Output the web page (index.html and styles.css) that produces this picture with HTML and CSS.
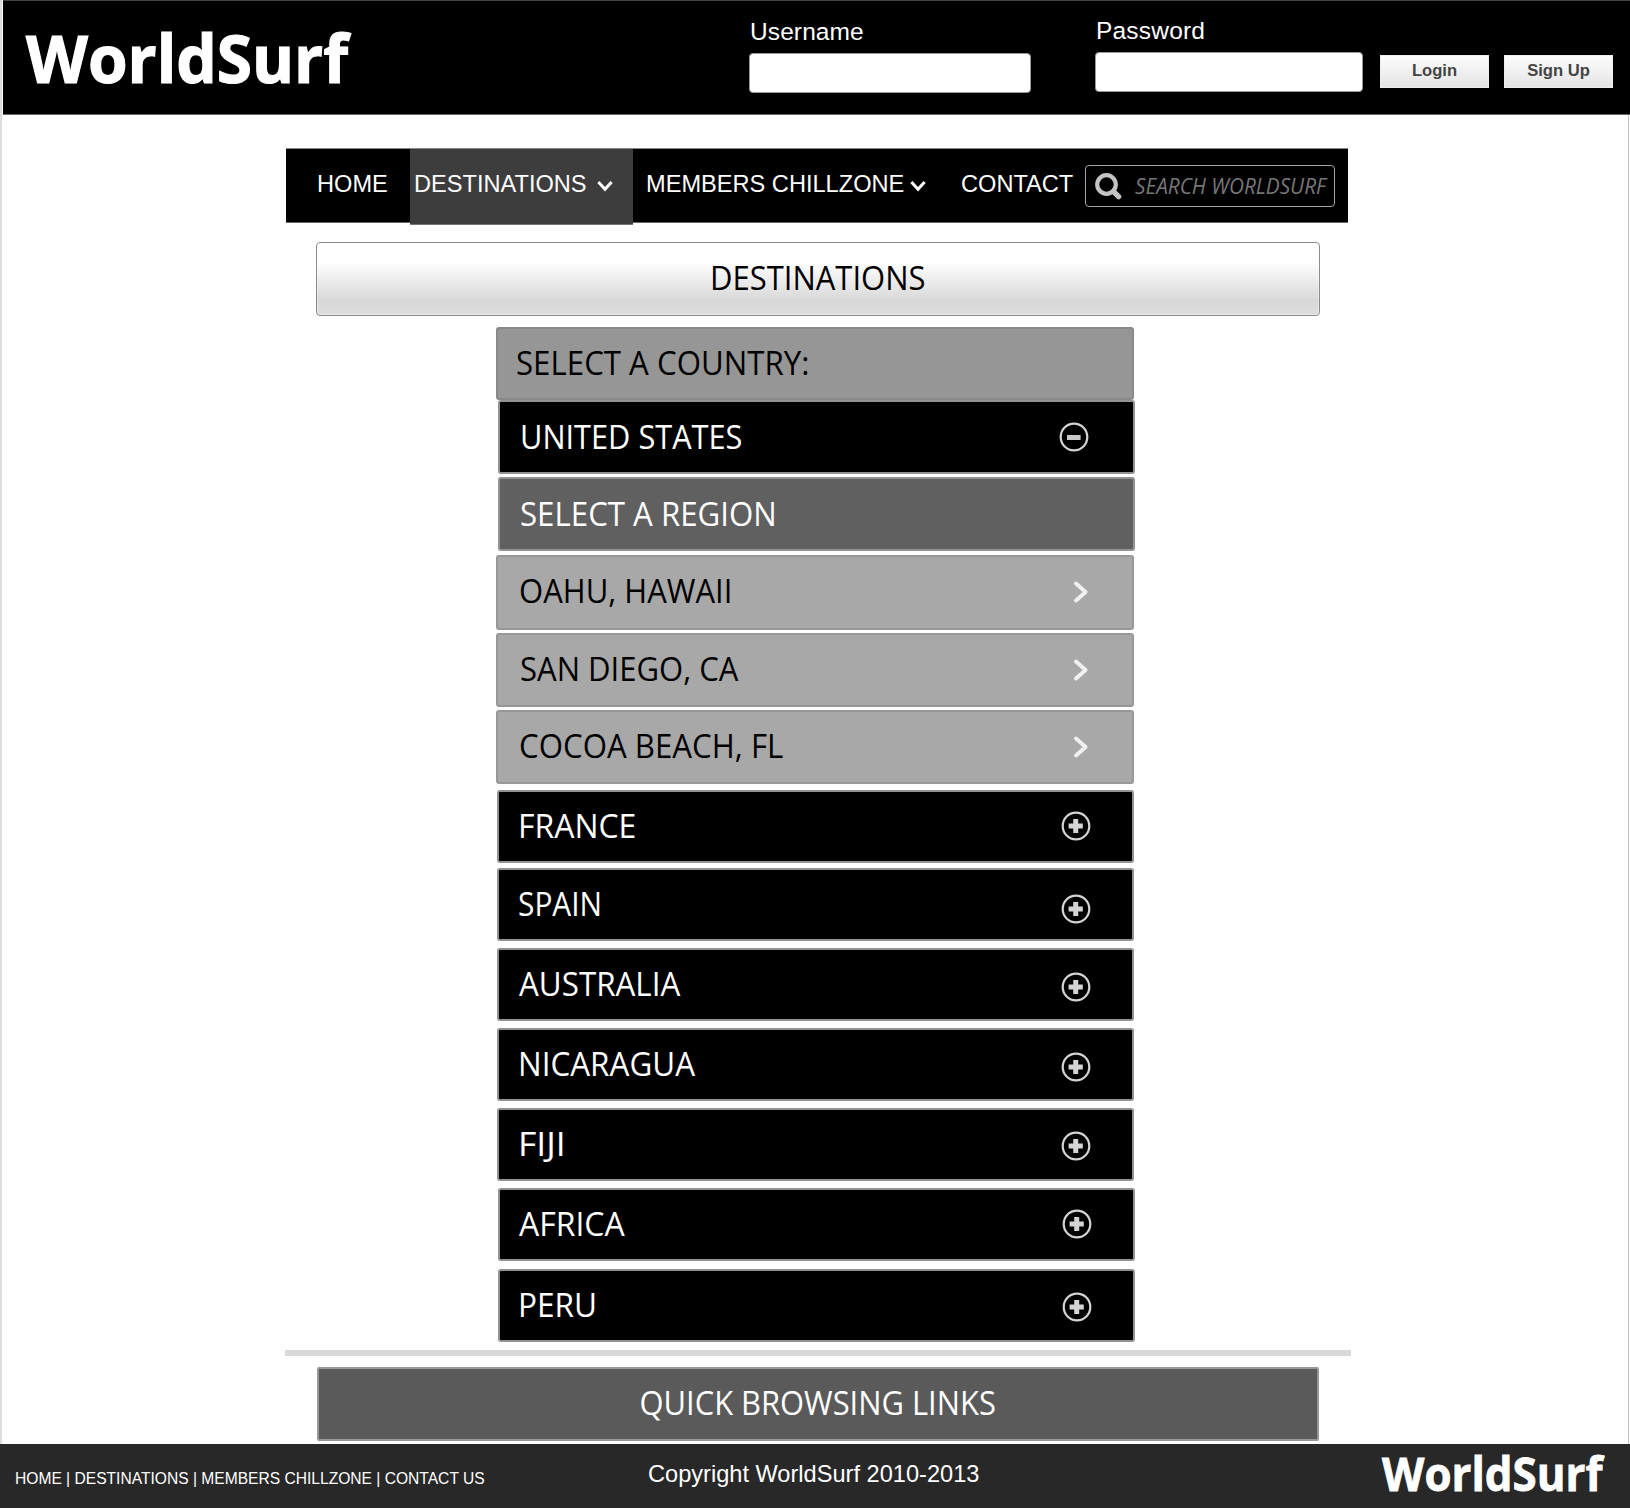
FILE: index.html
```html
<!DOCTYPE html>
<html lang="en">
<head>
<meta charset="utf-8">
<title>WorldSurf - Destinations</title>
<link rel="stylesheet" href="styles.css">
</head>
<body>
<svg class="sprite" aria-hidden="true">
  <symbol id="plus" viewBox="0 0 30 30"><circle cx="15" cy="15" r="13.3" fill="none" stroke="#d4d4d4" stroke-width="2.2"/><path d="M12.2 8h5v4.6h4.6v4.8h-4.6V22h-5v-4.6H7.6v-4.8h4.6z" fill="#d4d4d4"/></symbol>
  <symbol id="minus" viewBox="0 0 30 30"><circle cx="15" cy="15" r="13.3" fill="none" stroke="#d4d4d4" stroke-width="2.2"/><path d="M8 13h13.6v5H8z" fill="#c8c8c8"/></symbol>
  <symbol id="right" viewBox="0 0 16 24"><path d="M3 3.6 12.6 12 3 20.4" fill="none" stroke="#f0f0f0" stroke-width="4" stroke-linecap="round" stroke-linejoin="round"/></symbol>
  <symbol id="down" viewBox="0 0 16 12"><path d="M1.4 2 8 9.2 14.6 2" fill="none" stroke="#fff" stroke-width="3"/></symbol>
</svg>
<div class="page">
  <header class="header">
    <div class="logo">WorldSurf</div>
    <label class="field field-user"><span>Username</span><input class="input" type="text"></label>
    <label class="field field-pass"><span>Password</span><input class="input" type="password"></label>
    <button class="button">Login</button>
    <button class="button">Sign Up</button>
  </header>

  <nav class="nav">
    <a class="nav-item nav-home">HOME</a>
    <a class="nav-item nav-active">DESTINATIONS<svg class="down"><use href="#down"/></svg></a>
    <a class="nav-item nav-members">MEMBERS CHILLZONE<svg class="down"><use href="#down"/></svg></a>
    <a class="nav-item nav-contact">CONTACT</a>
    <div class="search">
      <svg class="search-icon" viewBox="0 0 27 27"><circle cx="11.5" cy="11.5" r="9.3" fill="none" stroke="#c4c4c4" stroke-width="4.2"/><path d="M18.6 18.6 23.6 23.6" stroke="#c4c4c4" stroke-width="5.4" stroke-linecap="round"/></svg>
      <span class="search-text">SEARCH WORLDSURF</span>
    </div>
  </nav>

  <h1 class="title"><span>DESTINATIONS</span></h1>

  <ul class="list">
    <li class="row prompt"><span class="label">SELECT A COUNTRY:</span></li>
    <li class="row usa"><span class="label">UNITED STATES</span><svg class="icon"><use href="#minus"/></svg></li>
    <li class="row regions"><span class="label">SELECT A REGION</span></li>
    <li class="row place oahu"><span class="label">OAHU, HAWAII</span><svg class="right"><use href="#right"/></svg></li>
    <li class="row place diego"><span class="label">SAN DIEGO, CA</span><svg class="right"><use href="#right"/></svg></li>
    <li class="row place cocoa"><span class="label">COCOA BEACH, FL</span><svg class="right"><use href="#right"/></svg></li>
    <li class="row france"><span class="label">FRANCE</span><svg class="icon"><use href="#plus"/></svg></li>
    <li class="row spain"><span class="label">SPAIN</span><svg class="icon"><use href="#plus"/></svg></li>
    <li class="row australia"><span class="label">AUSTRALIA</span><svg class="icon"><use href="#plus"/></svg></li>
    <li class="row nicaragua"><span class="label">NICARAGUA</span><svg class="icon"><use href="#plus"/></svg></li>
    <li class="row fiji"><span class="label">FIJI</span><svg class="icon"><use href="#plus"/></svg></li>
    <li class="row africa"><span class="label">AFRICA</span><svg class="icon"><use href="#plus"/></svg></li>
    <li class="row peru"><span class="label">PERU</span><svg class="icon"><use href="#plus"/></svg></li>
  </ul>

  <hr class="rule">
  <section class="quick"><span>QUICK BROWSING LINKS</span></section>
</div>
<footer class="footer">
  <div class="footer-links">HOME | DESTINATIONS | MEMBERS CHILLZONE | CONTACT US</div>
  <div class="copyright">Copyright WorldSurf 2010-2013</div>
  <div class="footer-logo">WorldSurf</div>
</footer>
</body>
</html>
```
FILE: styles.css
```css
* { box-sizing: border-box; }
body {
  margin: 0;
  width: 1630px;
  height: 1508px;
  background: #fefefe;
  font-family: "Liberation Sans", Arial, sans-serif;
}
.sprite { display: none; }
svg { flex: none; }
.page {
  height: 1444px;
  border-left: 2px solid #ddd;
  background: linear-gradient(#c4c4c4, #c4c4c4) right 1px top / 1px 100% no-repeat;
}

/* Header */
.header {
  display: flex;
  align-items: flex-start;
  height: 115px;
  margin-left: 1px;
  background: #000;
  border-top: 1px solid #444;
  border-bottom: 1px solid #666;
  color: #fff;
}
.logo {
  width: 724px;
  margin: 23px -2px 0 23px;
  font: bold 67px/67px "Open Sans", sans-serif;
  -webkit-text-stroke: 1.2px #fff;
  transform: scaleX(.956);
  transform-origin: left;
}
.field span {
  display: block;
  padding-left: 1px;
  font-size: 24.5px;
  line-height: 30px;
}
.input {
  display: block;
  width: 100%;
  height: 40px;
  margin-top: 6px;
  padding: 0 8px;
  border: 1px solid #999;
  border-radius: 4px;
  background: #fff;
}
.field-user { width: 282px; margin: 16px 64px 0 1px; letter-spacing: .1px; }
.field-pass { width: 268px; margin: 15px 17px 0 0; letter-spacing: .2px; }
.button {
  width: 109px;
  height: 33px;
  margin: 54px 16px 0 0;
  padding: 0 0 2px;
  border: 1px solid #eee;
  background: linear-gradient(#fdfdfd, #e4e4e4);
  color: #444;
  font: bold 16.6px "Liberation Sans", Arial, sans-serif;
}
.button:last-child { margin-left: -1px; }

/* Navigation */
.nav {
  display: flex;
  align-items: flex-start;
  width: 1062px;
  height: 75px;
  margin: 32.5px 0 0 284px;
  background: #000;
  border-top: 1px solid #888;
  border-bottom: 1px solid #666;
}
.nav-item {
  display: flex;
  height: 74px;
  color: #fff;
  font-size: 23.6px;
  line-height: 70px;
  white-space: nowrap;
}
.nav-home { width: 124px; padding-left: 31px; }
.nav-active {
  width: 223px;
  height: 76px;
  padding-left: 4px;
  background: #3d3d3d;
  border-bottom: 1px solid #777;
}
.nav-members { width: 315px; padding-left: 13px; }
.nav-contact { width: 137px; padding-left: 13px; }
.down { width: 16px; height: 12px; margin: 31px 0 0 10px; }
.nav-members .down { margin-left: 6px; }
.search {
  display: flex;
  width: 250px;
  height: 42px;
  margin-top: 16px;
  border: 1px solid #a5a5a5;
  border-radius: 4px;
}
.search-icon { width: 27px; height: 27px; margin: 7px 13px 0 9px; }
.search-text {
  color: #777;
  font: italic 22px/38px "Open Sans", sans-serif;
  white-space: nowrap;
  transform: scaleX(.943);
  transform-origin: left;
}

/* Page title */
.title {
  width: 1004px;
  height: 74px;
  margin: 19.5px 0 0 314px;
  border: 1px solid #8c8c8c;
  border-radius: 4px;
  background: linear-gradient(#fff 0, #fefefe 28%, #ececec 52%, #d8d8d8 80%, #dedede 100%);
  box-shadow: inset 0 0 2px #fff;
  color: #000;
  font: 33.6px/68px "Open Sans", sans-serif;
  text-align: center;
}
.title span { display: inline-block; transform: scaleX(.923); }

/* Country accordion */
.list {
  display: flex;
  flex-direction: column;
  width: 640px;
  margin: 11px 0 0 494px;
  padding: 0;
  list-style: none;
}
.row {
  --fit: .93;
  --drop: 21px;
  display: flex;
  justify-content: space-between;
  align-items: flex-start;
  width: 637px;
  height: 73px;
  margin: 7px 0 0 1px;
  padding: 0 41px 0 19px;
  border: 2px solid #929292;
  border-radius: 3px;
  background: #000;
  color: #fff;
}
.label {
  font: 33.6px/66px "Open Sans", sans-serif;
  white-space: nowrap;
  transform: scaleX(var(--fit));
  transform-origin: left;
}
.icon { width: 30px; height: 30px; margin-top: var(--drop); }
.right { width: 16px; height: 24px; margin-top: 23px; }
.prompt { width: 638px; margin: 0; padding-left: 18px; background: #969696; border-color: #898989; color: #000; }
.usa { --fit: .915; margin: 0 0 0 2px; height: 74px; padding: 1px 44px 0 20px; --drop: 19px; }
.regions { margin: 3px 0 0 2px; height: 74px; padding: 1px 43px 0 20px; background: #606060; }
.place {
  width: 638px;
  height: 74px;
  margin: 3px 0 0;
  padding: 0 43px 0 21px;
  background: #a8a8a8;
  border-color: #979797;
  color: #000;
}
.oahu { --fit: .924; margin-top: 4px; height: 75px; }
.diego { --fit: .924; padding-left: 22px; }
.france { --fit: .951; --drop: 19px; margin-top: 6px; }
.spain { --fit: .89; --drop: 24px; margin-top: 5px; }
.australia { --fit: .934; --drop: 22px; padding-left: 20px; }
.nicaragua { --fit: .936; --drop: 22px; }
.fiji { --fit: 1.06; }
.africa { --fit: .952; --drop: 19px; margin-left: 2px; padding-left: 19px; }
.peru { --fit: .94; margin: 8px 0 0 2px; padding-left: 18px; }

/* Page bottom */
.rule {
  width: 1066px;
  height: 6px;
  margin: 8px 0 0 283px;
  border: 0;
  background: #d9d9d9;
}
.quick {
  width: 1002px;
  height: 74px;
  margin: 11px 0 0 315px;
  border: 2px solid #979797;
  border-radius: 2px;
  background: #5a5a5a;
  color: #fff;
  font: 33.6px/67px "Open Sans", sans-serif;
  text-align: center;
}
.quick span { display: inline-block; transform: scaleX(.92); }
.footer {
  display: flex;
  height: 64px;
  background: #282828;
  color: #fff;
  white-space: nowrap;
}
.footer-links { width: 648px; padding-left: 15px; font-size: 15.6px; line-height: 70px; }
.copyright { width: 734px; font-size: 23.6px; line-height: 61px; }
.footer-logo {
  font: bold 47px/59px "Open Sans", sans-serif;
  -webkit-text-stroke: .8px #fff;
  transform: scaleX(.933);
  transform-origin: left;
}
```
